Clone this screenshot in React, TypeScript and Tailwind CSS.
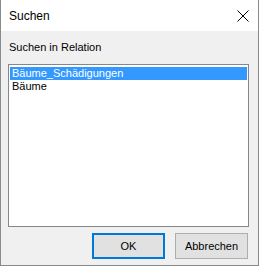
import { useState } from "react";

const items = ["Bäume_Schädigungen", "Bäume"];

export default function App() {
  const [selected, setSelected] = useState(0);

  return (
    <div className="flex h-[266px] w-[259px] flex-col border-x border-b border-[#8a8a8a] bg-[#f0f0f0] font-['Liberation_Sans',Arial,sans-serif] text-black">
      {/* title bar */}
      <div className="flex h-[31px] shrink-0 items-center justify-between bg-white pl-[8px] pr-[8px]">
        <span className="text-[12px] leading-none">Suchen</span>
        <svg width="12" height="12" viewBox="0 0 12 12" className="mr-[1px]">
          <path d="M0.5 0.5 L11.5 11.5 M11.5 0.5 L0.5 11.5" stroke="#000" strokeWidth="1" fill="none" />
        </svg>
      </div>

      <div className="flex flex-1 flex-col px-[7px] pt-[9px]">
        <p className="pl-[1px] text-[11px] leading-[14px]">Suchen in Relation</p>

        <div className="mt-[10px] h-[163px] w-[241px] border border-[#828790] bg-white p-[1px]">
          {items.map((item, i) => (
            <div
              key={item}
              onClick={() => setSelected(i)}
              className={
                i === selected
                  ? "mt-[1px] h-[13px] bg-[#3399ff] pl-[2px] text-[11px] leading-[13px] text-white"
                  : "h-[13px] pl-[2px] text-[11px] leading-[13px] text-black"
              }
            >
              {item}
            </div>
          ))}
        </div>

        <div className="mt-[6px] flex justify-end gap-[10px] pr-[3px]">
          <button className="h-[26px] w-[73px] border-2 border-[#0078d7] bg-[#e1e1e1] text-[11px]">
            OK
          </button>
          <button className="h-[26px] w-[73px] border border-[#adadad] bg-[#e1e1e1] text-[11px]">
            Abbrechen
          </button>
        </div>
      </div>
    </div>
  );
}
